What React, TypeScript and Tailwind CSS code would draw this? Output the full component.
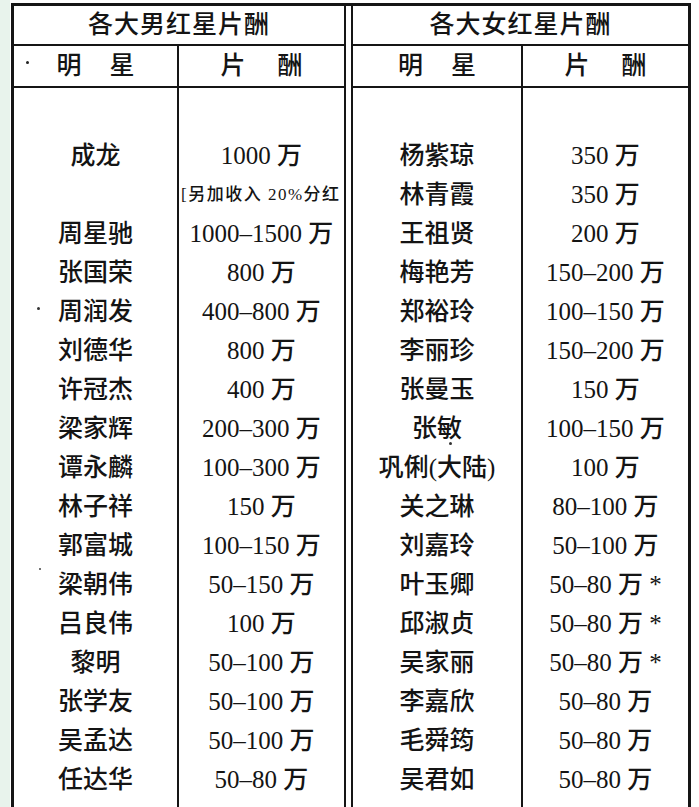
const FONT = "font-['Liberation_Serif','Noto_Sans_CJK_SC',serif]";

const male: [string, string][] = [
  ["成龙", "1000 万"],
  ["", "note"],
  ["周星驰", "1000–1500 万"],
  ["张国荣", "800 万"],
  ["周润发", "400–800 万"],
  ["刘德华", "800 万"],
  ["许冠杰", "400 万"],
  ["梁家辉", "200–300 万"],
  ["谭永麟", "100–300 万"],
  ["林子祥", "150 万"],
  ["郭富城", "100–150 万"],
  ["梁朝伟", "50–150 万"],
  ["吕良伟", "100 万"],
  ["黎明", "50–100 万"],
  ["张学友", "50–100 万"],
  ["吴孟达", "50–100 万"],
  ["任达华", "50–80 万"],
];

const female: [string, string][] = [
  ["杨紫琼", "350 万"],
  ["林青霞", "350 万"],
  ["王祖贤", "200 万"],
  ["梅艳芳", "150–200 万"],
  ["郑裕玲", "100–150 万"],
  ["李丽珍", "150–200 万"],
  ["张曼玉", "150 万"],
  ["张敏", "100–150 万"],
  ["巩俐(大陆)", "100 万"],
  ["关之琳", "80–100 万"],
  ["刘嘉玲", "50–100 万"],
  ["叶玉卿", "50–80 万 *"],
  ["邱淑贞", "50–80 万 *"],
  ["吴家丽", "50–80 万 *"],
  ["李嘉欣", "50–80 万"],
  ["毛舜筠", "50–80 万"],
  ["吴君如", "50–80 万"],
];

function Half({
  title,
  rows,
  nameWidth,
  className,
}: {
  title: string;
  rows: [string, string][];
  nameWidth: string;
  className: string;
}) {
  return (
    <div className={`flex flex-col shrink-0 border-[#151515] ${className}`}>
      <div className="h-[40px] border-b-2 border-[#151515] flex items-center justify-center text-[25px] tracking-[1px]">
        {title}
      </div>
      <div className="flex flex-1">
        <div className={`${nameWidth} shrink-0 border-r-2 border-[#151515] flex flex-col`}>
          <div className="h-[42px] border-b-2 border-[#151515] flex items-center justify-center gap-7 text-[25px]">
            <span>明</span>
            <span>星</span>
          </div>
          <div className="pt-[48px] flex flex-col">
            {rows.map(([name], i) => (
              <div key={i} className="h-[39px] flex items-center justify-center text-[25px]">
                {name}
              </div>
            ))}
          </div>
        </div>
        <div className="flex-1 min-w-0 flex flex-col">
          <div className="h-[42px] border-b-2 border-[#151515] flex items-center justify-center gap-8 text-[25px]">
            <span>片</span>
            <span>酬</span>
          </div>
          <div className="pt-[48px] flex flex-col">
            {rows.map(([, fee], i) =>
              fee === "note" ? (
                <div
                  key={i}
                  className="h-[39px] flex items-center pl-[2px] text-[17px] tracking-[1.5px] whitespace-nowrap"
                >
                  [另加收入 20%分红
                </div>
              ) : (
                <div key={i} className="h-[39px] flex items-center justify-center text-[25px] whitespace-nowrap">
                  {fee}
                </div>
              )
            )}
          </div>
        </div>
      </div>
    </div>
  );
}

export default function App() {
  return (
    <div className={`relative flex w-[699px] h-[807px] bg-white overflow-hidden font-medium text-[#141414] ${FONT}`}>
      <div className="w-[10px] h-full bg-[#e8f3ec]" />
      <div className="w-[1px]" />
      <div className="mt-[3px] h-[804px] w-[680px] flex border-t-[3px] border-x-[3px] border-[#151515]">
        <Half title="各大男红星片酬" rows={male} nameWidth="w-[165px]" className="w-[332px] border-r-2" />
        <div className="w-[5px] shrink-0" />
        <Half title="各大女红星片酬" rows={female} nameWidth="w-[170px]" className="w-[337px] border-l-2" />
      </div>

      <span className="absolute left-[26px] top-[61px] w-[3px] h-[3px] rounded-full bg-[#222]" />
      <span className="absolute left-[37px] top-[307px] w-[3px] h-[3px] rounded-full bg-[#333]" />
      <span className="absolute left-[39px] top-[568px] w-[2px] h-[2px] rounded-full bg-[#444]" />
      <span className="absolute left-[449px] top-[442px] w-[3px] h-[3px] rounded-full bg-[#333]" />
    </div>
  );
}
